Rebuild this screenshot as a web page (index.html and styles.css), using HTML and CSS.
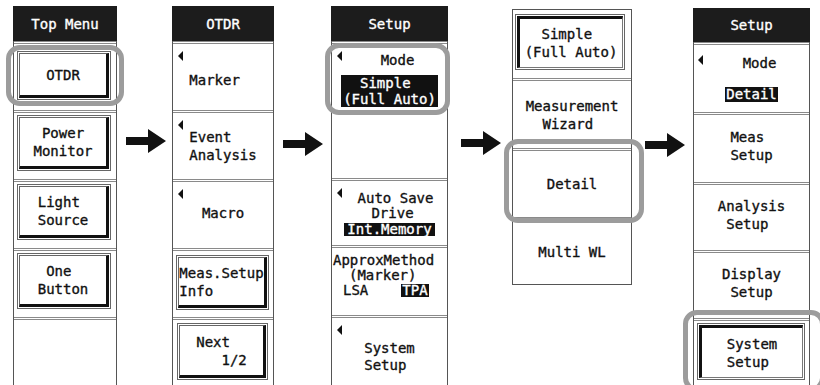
FILE: index.html
```html
<!DOCTYPE html>
<html lang="en">
<head>
    <meta charset="UTF-8">
    <meta name="viewport" content="width=device-width, initial-scale=1.0">
    <title>OTDR Setup Menu</title>
    <link rel="stylesheet" href="styles.css">
</head>
<body>
    <div class="flow">

        <!-- Top Menu -->
        <div class="panel col1">
            <div class="head">Top Menu</div>
            <div class="cell has-btn otdr-cell">
                <div class="btn"><div class="face"><span class="lbl">OTDR</span></div></div>
                <span class="ring ring-otdr"></span>
            </div>
            <div class="cell has-btn">
                <div class="btn"><div class="face"><span class="lbl"> Power
Monitor</span></div></div>
            </div>
            <div class="cell has-btn">
                <div class="btn"><div class="face"><span class="lbl">Light
Source</span></div></div>
            </div>
            <div class="cell has-btn">
                <div class="btn"><div class="face"><span class="lbl"> One
Button</span></div></div>
            </div>
            <div class="cell"></div>
        </div>

        <svg class="arrow a1" viewBox="0 0 40 24"><path d="M0 8H22V0L40 12L22 24V16H0Z"/></svg>

        <!-- OTDR -->
        <div class="panel col2">
            <div class="head">OTDR</div>
            <div class="cell marker-cell">
                <span class="tri"></span>
                <span class="lbl">Marker  </span>
            </div>
            <div class="cell">
                <span class="tri"></span>
                <span class="lbl">Event
Analysis</span>
            </div>
            <div class="cell macro-cell">
                <span class="tri"></span>
                <span class="lbl">Macro</span>
            </div>
            <div class="cell has-btn btn-c2">
                <div class="btn"><div class="face"><span class="lbl">Meas.Setup
Info</span></div></div>
            </div>
            <div class="cell has-btn btn-c2 next-cell">
                <div class="btn"><div class="face"><span class="lbl">Next
   1/2</span></div></div>
            </div>
        </div>

        <svg class="arrow a2" viewBox="0 0 40 24"><path d="M0 8H22V0L40 12L22 24V16H0Z"/></svg>

        <!-- Setup (Simple) -->
        <div class="panel col3">
            <div class="head">Setup</div>
            <div class="cell tall stack mode3">
                <span class="tri"></span>
                <div class="mode-line">Mode</div>
                <div class="inv big"><span class="lbl">  Simple
(Full Auto)</span></div>
                <span class="ring ring-mode"></span>
            </div>
            <div class="cell h67 stack autosave">
                <span class="tri"></span>
                <div class="as1">Auto Save</div>
                <div class="as2">Drive</div>
                <div class="inv">Int.Memory</div>
            </div>
            <div class="cell h70 stack approx">
                <div class="ap-line">ApproxMethod</div>
                <div class="ap-line ap-mid">(Marker)</div>
                <div class="ap-line ap-row">
                    <span>LSA</span>
                    <span class="inv">TPA</span>
                </div>
            </div>
            <div class="cell h70 sys3">
                <span class="tri"></span>
                <span class="lbl">System
Setup</span>
            </div>
        </div>

        <svg class="arrow a3" viewBox="0 0 40 24"><path d="M0 8H22V0L40 12L22 24V16H0Z"/></svg>

        <!-- Mode choices -->
        <div class="panel col4">
            <div class="cell h68 has-btn simple-cell">
                <div class="btn down"><div class="face"><span class="lbl">  Simple
(Full Auto)</span></div></div>
            </div>
            <div class="cell h70">
                <span class="lbl">Measurement
  Wizard</span>
            </div>
            <div class="cell h69">
                <span class="lbl">Detail</span>
                <span class="ring ring-detail"></span>
            </div>
            <div class="cell h67">
                <span class="lbl">Multi WL</span>
            </div>
        </div>

        <svg class="arrow a4" viewBox="0 0 40 24"><path d="M0 8H22V0L40 12L22 24V16H0Z"/></svg>

        <!-- Setup (Detail) -->
        <div class="panel col5">
            <div class="head head5">Setup</div>
            <div class="cell h70 stack mode5">
                <span class="tri"></span>
                <div class="mode-line">Mode</div>
                <div class="inv">Detail</div>
            </div>
            <div class="cell h70 up">
                <span class="lbl">Meas
Setup</span>
            </div>
            <div class="cell h68 up">
                <span class="lbl">Analysis
 Setup</span>
            </div>
            <div class="cell h68 up">
                <span class="lbl">Display
 Setup</span>
            </div>
            <div class="cell h68 has-btn sys5">
                <div class="btn down"><div class="face"><span class="lbl">System
Setup</span></div></div>
                <span class="ring ring-sys"></span>
            </div>
        </div>

    </div>
</body>
</html>
```

FILE: styles.css
```css
/* Dasar */
body {
    margin: 0;
    width: 820px;
    height: 385px;
    overflow: hidden;
    background: #fff;
    font-family: "DejaVu Sans Mono", "Liberation Mono", monospace;
    font-size: 14px;
    color: #111;
    -webkit-text-stroke: 0.35px currentColor;
}

.flow {
    display: flex;
    align-items: flex-start;
    padding-left: 13px;
}

/* Panel menu */
.panel {
    box-sizing: border-box;
    border-left: 1px solid #555;
    border-right: 1px solid #555;
    flex: none;
}

.col1 { width: 104px; margin-top: 6px; }
.col2 { width: 102px; margin-top: 6px; margin-left: 6px; }
.col3 { width: 117px; margin-top: 6px; margin-left: 8px; }
.col4 {
    width: 120px;
    margin-top: 9px;
    margin-left: 11px;
    border-top: 1px solid #555;
    border-bottom: 1px solid #555;
}
.col5 { width: 117px; margin-top: 8px; margin-left: 8px; }

.head {
    height: 35px;
    margin: 0 -1px;
    background: #1c1c1c;
    color: #fff;
    display: flex;
    align-items: center;
    justify-content: center;
}

.head5 { height: 34px; }

/* Sel */
.cell {
    position: relative;
    box-sizing: border-box;
    height: 69px;
    border-top: 3px double #8a8a8a;
    display: flex;
    align-items: center;
    justify-content: center;
}

.col4 .cell:first-child { border-top: 0; }

.h67 { height: 67px; }
.h68 { height: 68px; }
.h69 { height: 69px; }
.h70 { height: 70px; }
.tall { height: 137px; }

.up { padding-bottom: 6px; }

.lbl {
    white-space: pre;
    text-align: left;
    line-height: 18px;
}

.stack {
    flex-direction: column;
    justify-content: flex-start;
}

.tri {
    position: absolute;
    left: 5px;
    top: 7px;
    width: 0;
    height: 0;
    border-right: 5px solid #111;
    border-top: 5px solid transparent;
    border-bottom: 5px solid transparent;
}

.inv {
    display: inline-block;
    background: #111;
    color: #fff;
    line-height: 13px;
    padding: 0 1px;
}

.inv.big .lbl { line-height: 16px; }

/* Tombol */
.has-btn {
    align-items: stretch;
    padding: 2px 5px 8px 3px;
}

.otdr-cell { padding: 7px 5px 10px 3px; }
.btn-c2 { padding: 4px 5px 7px 4px; }
.next-cell { padding: 3px 5px 6px 4px; }
.simple-cell { padding: 4px 6px 8px 2px; }
.sys5 { padding: 2px 4px 6px 3px; }

.btn {
    flex: 1;
    display: flex;
    border: 1px solid #666;
    padding: 1px;
    background: #fff;
}

.face {
    flex: 1;
    display: flex;
    align-items: center;
    justify-content: center;
    border-style: solid;
    border-width: 1px 3px 3px 1px;
    border-color: #666 #111 #111 #666;
}

.down .face {
    border-width: 3px 1px 1px 3px;
    border-color: #111 #777 #777 #111;
}

/* Isi khusus */
.marker-cell { padding-top: 5px; }
.macro-cell { padding-bottom: 4px; }

.mode-line {
    line-height: 18px;
    padding-left: 16px;
}

.mode3 { padding-top: 7px; }
.mode3 .inv { margin-top: 6px; padding: 0 2px; }

.mode5 { padding-top: 9px; }
.mode5 .inv { margin-top: 15px; line-height: 15px; }
.mode5 .tri { left: 4px; top: 10px; }

.autosave { padding-top: 10px; line-height: 15px; }
.as1 { padding-left: 12px; }
.as2 { padding-left: 6px; }
.autosave .inv { margin-top: 2px; padding: 0 3px; }

.approx { align-items: flex-start; padding: 5px 0 0 1px; }
.ap-line { line-height: 15px; }
.ap-mid { padding-left: 16px; }
.ap-row {
    display: flex;
    align-items: center;
    gap: 33px;
    padding-left: 10px;
}
.ap-row .inv { line-height: 13px; }

.sys3 { padding-top: 10px; }
.sys3 .lbl { line-height: 17px; }

/* Lingkaran sorotan */
.ring {
    position: absolute;
    z-index: 2;
    box-sizing: border-box;
    border: 5px solid #9c9c9c;
    border-radius: 14px;
}

.ring-otdr { top: 1px; left: -8px; width: 118px; height: 61px; }
.ring-mode { top: -1px; left: -7px; width: 125px; height: 72px; }
.ring-detail { top: -12px; left: -9px; width: 140px; height: 84px; }
.ring-sys { top: -11px; left: -11px; width: 142px; height: 82px; }

/* Panah */
.arrow {
    flex: none;
    width: 40px;
    height: 24px;
    fill: #111;
}

.a1 { margin: 129px 0 0 9px; }
.a2 { margin: 132px 0 0 9px; }
.a3 { margin: 131px 0 0 13px; }
.a4 { margin: 133px 0 0 13px; }
```
